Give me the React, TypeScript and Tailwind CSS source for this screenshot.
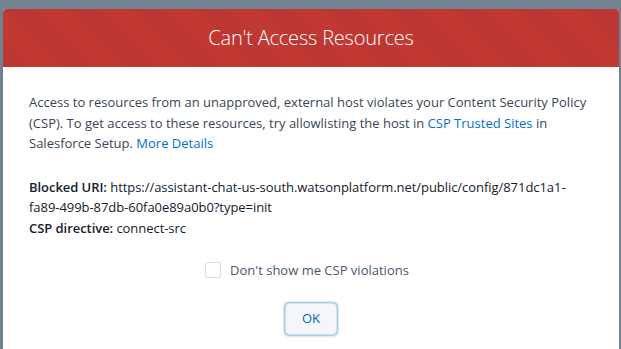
export default function App() {
  return (
    <div
      className="h-[349px] w-[621px] overflow-hidden bg-[#718290] pl-[3px] pr-[2px] pt-[9px]"
      style={{ fontFamily: '"Open Sans", "Liberation Sans", sans-serif' }}
    >
      <div className="h-[400px] rounded-t-[4px] overflow-hidden bg-white">
        {/* Header with alert texture */}
        <div
          className="flex h-[58px] items-center justify-center bg-[#c23934] bg-[length:64px_64px] bg-[linear-gradient(45deg,rgba(0,0,0,0.03)_25%,transparent_25%,transparent_50%,rgba(0,0,0,0.03)_50%,rgba(0,0,0,0.03)_75%,transparent_75%,transparent)]"
        >
          <h2 className="text-[20px] font-light tracking-[-0.2px] text-white">Can't Access Resources</h2>
        </div>

        <div className="px-[26px] pt-[25px] text-[13px] leading-[20.5px] text-[#3b4656]">
          <p>
            Access to resources from an unapproved, external host violates your Content Security Policy
            (CSP). To get access to these resources, try allowlisting the host in{' '}
            <a className="text-[#0070d2]">CSP Trusted Sites</a> in Salesforce Setup.{' '}
            <a className="text-[#0070d2]">More Details</a>
          </p>

          <div className="mt-[23px] text-[#16202c] tracking-[-0.05px]">
            <p>
              <span className="font-semibold">Blocked URI:</span>{' '}
              https://assistant-chat-us-south.watsonplatform.net/public/config/871dc1a1-fa89-499b-87db-60fa0e89a0b0?type=init
            </p>
            <p>
              <span className="font-semibold">CSP directive:</span> connect-src
            </p>
          </div>

          <label className="mt-[22px] flex items-center justify-center gap-[9px] pr-[8px]">
            <span className="h-[16px] w-[16px] rounded-[2px] border border-[#d8dde6] bg-white" />
            <span className="text-[#4a5870]">Don't show me CSP violations</span>
          </label>

          <div className="mt-[22px] flex justify-center">
            <button className="h-[32px] w-[52px] rounded-[4px] border border-[#d8dde6] bg-[#f4f6f9] text-[13px] text-[#0062b8] shadow-[0_0_3px_#0070d2]">
              OK
            </button>
          </div>
        </div>
      </div>
    </div>
  )
}
